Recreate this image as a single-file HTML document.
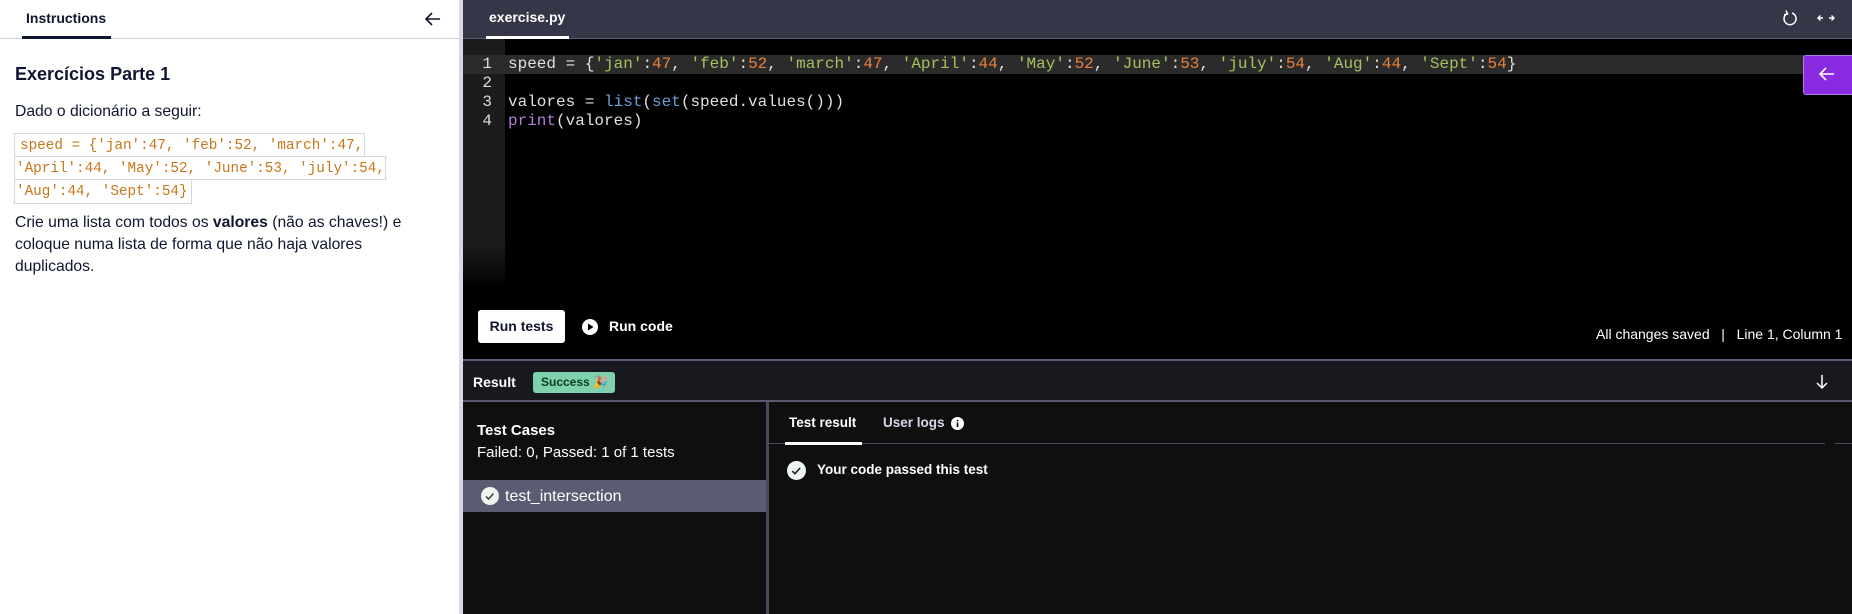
<!DOCTYPE html>
<html><head><meta charset="utf-8"><style>
*{margin:0;padding:0;box-sizing:border-box}
body{width:1852px;height:614px;overflow:hidden;position:relative;font-family:"Liberation Sans",sans-serif;background:#000}
.a{position:absolute}
.mono{font-family:"Liberation Mono",monospace}
</style></head><body>
<!-- left panel -->
<div class="a" style="left:0;top:0;width:459px;height:614px;background:#fff"></div>
<div class="a" style="left:459px;top:0;width:4px;height:614px;background:#d8d8e4"></div>
<div class="a" style="left:0;top:38px;width:459px;height:1px;background:#d0d0dc"></div>
<div class="a" style="left:26px;top:10px;font-size:14px;font-weight:bold;color:#10162f">Instructions</div>
<div class="a" style="left:22px;top:36px;width:89px;height:3px;background:#10162f"></div>
<svg class="a" style="left:424px;top:11px" width="18" height="16" viewBox="0 0 18 16"><path d="M16 8H2M8 2L2 8l6 6" stroke="#10162f" stroke-width="1.6" fill="none"/></svg>
<div class="a" style="left:15px;top:64px;font-size:18px;font-weight:bold;color:#10162f">Exercícios Parte 1</div>
<div class="a" style="left:15px;top:103px;font-size:15.7px;color:#10162f">Dado o dicionário a seguir:</div>
<div class="a mono" style="left:14px;top:133px;width:351px;height:23px;border:1px solid #d6d6e0;border-bottom:none;font-size:14.3px;color:#c87618;padding:2px 0 0 5px;line-height:20px">speed = {'jan':47, 'feb':52, 'march':47,</div>
<div class="a mono" style="left:14px;top:156px;width:372px;height:24px;border:1px solid #d6d6e0;font-size:14.3px;color:#c87618;padding:2px 0 0 1px;line-height:20px">'April':44, 'May':52, 'June':53, 'july':54,</div>
<div class="a mono" style="left:14px;top:180px;width:178px;height:24px;border:1px solid #d6d6e0;border-top:none;font-size:14.3px;color:#c87618;padding:2px 0 0 1px;line-height:20px">'Aug':44, 'Sept':54}</div>
<div class="a" style="left:15px;top:212px;font-size:15.7px;line-height:22px;color:#10162f;width:420px">Crie uma lista com todos os <b>valores</b> (não as chaves!) e coloque numa lista de forma que não haja valores duplicados.</div>

<!-- editor header -->
<div class="a" style="left:463px;top:0;width:1389px;height:38px;background:#363649"></div>
<div class="a" style="left:463px;top:38px;width:1389px;height:1px;background:#5a5a72"></div>
<div class="a" style="left:489px;top:9px;font-size:14px;font-weight:bold;color:#fff">exercise.py</div>
<div class="a" style="left:486px;top:36px;width:83px;height:3px;background:#fff"></div>
<svg class="a" style="left:1780px;top:9px" width="20" height="20" viewBox="0 0 20 20"><path d="M7 4.5A6 6 0 1 0 12 4" stroke="#fff" stroke-width="1.5" fill="none"/><path d="M6 1.5l1.5 3.5-3.5 1" stroke="#fff" stroke-width="1.5" fill="none"/></svg>
<svg class="a" style="left:1817px;top:13px" width="18" height="10" viewBox="0 0 18 10"><path d="M1 5h5M3.5 2.5L1 5l2.5 2.5M17 5h-5M14.5 2.5L17 5l-2.5 2.5" stroke="#fff" stroke-width="1.4" fill="none"/></svg>

<!-- editor body -->
<div class="a" style="left:463px;top:39px;width:42px;height:250px;background:linear-gradient(#1c1c1c 0,#1c1c1c 82%,#000 100%)"></div>
<div class="a" style="left:463px;top:55px;width:1389px;height:19px;background:#2b2b2b"></div>
<div class="a mono" style="left:476px;top:55px;font-size:16px;line-height:19px;color:#ddd;white-space:pre;text-align:right;width:16px">1
2
3
4</div>
<div class="a mono" style="left:508px;top:55px;font-size:16px;line-height:19px;color:#e0e0e0;white-space:pre">speed = {<span style="color:#a5c25c">'jan'</span>:<span style="color:#e8803a">47</span>, <span style="color:#a5c25c">'feb'</span>:<span style="color:#e8803a">52</span>, <span style="color:#a5c25c">'march'</span>:<span style="color:#e8803a">47</span>, <span style="color:#a5c25c">'April'</span>:<span style="color:#e8803a">44</span>, <span style="color:#a5c25c">'May'</span>:<span style="color:#e8803a">52</span>, <span style="color:#a5c25c">'June'</span>:<span style="color:#e8803a">53</span>, <span style="color:#a5c25c">'july'</span>:<span style="color:#e8803a">54</span>, <span style="color:#a5c25c">'Aug'</span>:<span style="color:#e8803a">44</span>, <span style="color:#a5c25c">'Sept'</span>:<span style="color:#e8803a">54</span>}

valores = <span style="color:#6a9fd8">list</span>(<span style="color:#6a9fd8">set</span>(speed.values()))
<span style="color:#b27fd6">print</span>(valores)</div>
<div class="a" style="left:1803px;top:55px;width:49px;height:40px;background:#8a2be2;border:1px solid #a97cf0;border-right:none;border-radius:3px 0 0 3px"></div>
<svg class="a" style="left:1818px;top:66px" width="18" height="16" viewBox="0 0 18 16"><path d="M16 8H2M8 2L2 8l6 6" stroke="#fff" stroke-width="1.6" fill="none"/></svg>

<div class="a" style="left:478px;top:310px;width:87px;height:33px;background:#fff;border-radius:3px;font-size:14px;font-weight:bold;color:#10162f;text-align:center;line-height:33px">Run tests</div>
<svg class="a" style="left:582px;top:319px" width="16" height="16" viewBox="0 0 16 16"><circle cx="8" cy="8" r="8" fill="#fff"/><path d="M6 4.5v7l5.5-3.5z" fill="#000"/></svg>
<div class="a" style="left:609px;top:318px;font-size:14px;font-weight:bold;color:#fff">Run code</div>
<div class="a" style="left:1596px;top:326px;font-size:14px;color:#fff;white-space:pre">All changes saved   |   Line 1, Column 1</div>

<!-- result bar -->
<div class="a" style="left:463px;top:359px;width:1389px;height:2px;background:#5a5a72"></div>
<div class="a" style="left:463px;top:361px;width:1389px;height:39px;background:#18181f"></div>
<div class="a" style="left:463px;top:400px;width:1389px;height:2px;background:#5a5a72"></div>
<div class="a" style="left:473px;top:374px;font-size:14px;font-weight:bold;color:#fff">Result</div>
<div class="a" style="left:533px;top:372px;width:82px;height:21px;background:#7fd1ae;border-radius:3px;font-size:12px;font-weight:bold;color:#0e3b26;line-height:21px;padding-left:8px">Success 🎉</div>
<svg class="a" style="left:1815px;top:374px" width="14" height="16" viewBox="0 0 14 16"><path d="M7 1v13M2 9l5 5 5-5" stroke="#fff" stroke-width="1.5" fill="none"/></svg>

<!-- bottom -->
<div class="a" style="left:463px;top:402px;width:1389px;height:212px;background:#0f0f10"></div>
<div class="a" style="left:766px;top:402px;width:3px;height:212px;background:#4a4a5e"></div>
<div class="a" style="left:477px;top:422px;font-size:15px;font-weight:bold;color:#fff">Test Cases</div>
<div class="a" style="left:477px;top:444px;font-size:15px;color:#fff">Failed: 0, Passed: 1 of 1 tests</div>
<div class="a" style="left:463px;top:480px;width:303px;height:32px;background:#5b5b72"></div>
<svg class="a" style="left:481px;top:487px" width="18" height="18" viewBox="0 0 18 18"><circle cx="9" cy="9" r="9" fill="#eef6f2"/><path d="M5 9.5l2.5 2.5 5-5.5" stroke="#333" stroke-width="1.4" fill="none"/></svg>
<div class="a" style="left:505px;top:488px;font-size:16px;color:#fff">test_intersection</div>

<div class="a" style="left:789px;top:415px;font-size:13.5px;font-weight:bold;color:#fff">Test result</div>
<div class="a" style="left:883px;top:415px;font-size:13.5px;font-weight:bold;color:#d8d8e8">User logs</div>
<svg class="a" style="left:951px;top:417px" width="13" height="13" viewBox="0 0 13 13"><circle cx="6.5" cy="6.5" r="6.5" fill="#fff"/><rect x="5.7" y="5.5" width="1.6" height="4.5" fill="#000"/><circle cx="6.5" cy="3.6" r="0.9" fill="#000"/></svg>
<div class="a" style="left:769px;top:443px;width:1056px;height:1px;background:#4a4a5e"></div>
<div class="a" style="left:1835px;top:443px;width:17px;height:1px;background:#4a4a5e"></div>
<div class="a" style="left:785px;top:442px;width:77px;height:3px;background:#fff"></div>
<svg class="a" style="left:787px;top:461px" width="19" height="19" viewBox="0 0 18 18"><circle cx="9" cy="9" r="9" fill="#eef6f2"/><path d="M5 9.5l2.5 2.5 5-5.5" stroke="#222" stroke-width="1.5" fill="none"/></svg>
<div class="a" style="left:817px;top:462px;font-size:13.5px;font-weight:bold;color:#fff">Your code passed this test</div>
</body></html>
